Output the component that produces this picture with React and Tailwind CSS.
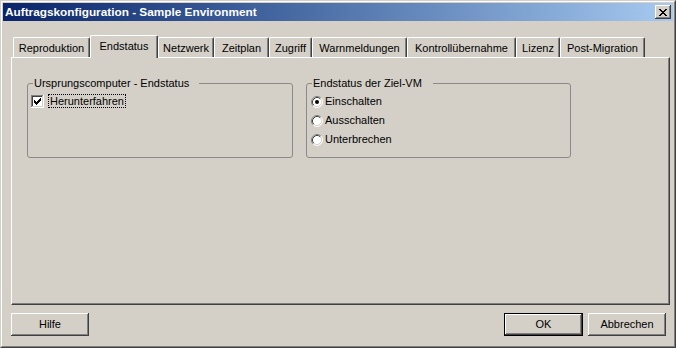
import React from "react";

const raised =
  "shadow-[inset_-1px_-1px_#404040,inset_1px_1px_#ffffff,inset_-2px_-2px_#808080,inset_2px_2px_#d4d0c8]";

function CheckBox() {
  const cols = [
    [3, 5], [4, 6], [5, 7], [6, 6], [7, 5], [8, 4], [9, 3],
  ];
  return (
    <svg width="13" height="13" viewBox="0 0 13 13" shapeRendering="crispEdges">
      <rect x="0" y="0" width="13" height="13" fill="#ffffff" />
      <rect x="0" y="0" width="12" height="1" fill="#808080" />
      <rect x="0" y="0" width="1" height="12" fill="#808080" />
      <rect x="1" y="1" width="10" height="1" fill="#404040" />
      <rect x="1" y="1" width="1" height="10" fill="#404040" />
      <rect x="1" y="11" width="11" height="1" fill="#d4d0c8" />
      <rect x="11" y="1" width="1" height="11" fill="#d4d0c8" />
      {cols.map(([x, y]) => (
        <rect key={x} x={x} y={y} width="1" height="3" fill="#000" />
      ))}
    </svg>
  );
}

function Radio({ checked }) {
  return (
    <svg width="12" height="12" viewBox="0 0 12 12">
      <circle cx="6" cy="6" r="5" fill="#ffffff" />
      <path d="M9.89 2.11 A5.5 5.5 0 0 0 2.11 9.89" fill="none" stroke="#808080" strokeWidth="1" />
      <path d="M2.11 9.89 A5.5 5.5 0 0 0 9.89 2.11" fill="none" stroke="#ffffff" strokeWidth="1" />
      <path d="M9.18 2.82 A4.5 4.5 0 0 0 2.82 9.18" fill="none" stroke="#404040" strokeWidth="1" />
      <path d="M2.82 9.18 A4.5 4.5 0 0 0 9.18 2.82" fill="none" stroke="#d4d0c8" strokeWidth="1" />
      {checked && <circle cx="6" cy="6" r="2" fill="#000" />}
    </svg>
  );
}

function Tab({ label, w, selected }) {
  if (selected) {
    return (
      <div
        className={`relative z-10 h-[23px] -mb-px flex items-start justify-center pt-[4px] bg-[#d4d0c8] border-l border-t border-white rounded-tl-[2px] rounded-tr-[2px] border-r border-r-[#404040] shadow-[inset_-1px_0_#808080] ${w}`}
      >
        {label}
      </div>
    );
  }
  return (
    <div
      className={`h-[20px] flex items-center justify-center pt-[1px] bg-[#d4d0c8] border-l border-t border-white rounded-tl-[2px] rounded-tr-[2px] border-r border-r-[#404040] shadow-[inset_-1px_0_#808080] ${w}`}
    >
      {label}
    </div>
  );
}

function Button({ children, def }) {
  if (def) {
    return (
      <div className="w-[79px] h-[23px] border border-black">
        <div className={`w-full h-full flex items-center justify-center ${raised}`}>{children}</div>
      </div>
    );
  }
  return (
    <div className={`w-[78px] h-[23px] flex items-center justify-center ${raised}`}>{children}</div>
  );
}

export default function App() {
  return (
    <div className="w-[676px] h-[348px] border border-t-[#d4d0c8] border-l-[#d4d0c8] border-r-[#404040] border-b-[#404040] bg-[#d4d0c8] font-['Liberation_Sans',Arial,sans-serif] text-[11px] leading-[13px] text-black">
      <div className="w-full h-full border border-t-white border-l-white border-r-[#808080] border-b-[#808080] p-px flex flex-col">
        {/* Title bar */}
        <div className="h-[18px] shrink-0 flex items-center justify-between bg-gradient-to-r from-[#0a246a] to-[#a6caf0] pl-[2px] pr-[2px]">
          <span className="font-bold text-white text-[11.8px] leading-[13px] font-['Liberation_Sans',Arial,sans-serif]">
            Auftragskonfiguration - Sample Environment
          </span>
          <div className={`w-[16px] h-[14px] flex items-center justify-center bg-[#d4d0c8] ${raised}`}>
            <svg width="8" height="7" viewBox="0 0 8 7" shapeRendering="crispEdges">
              <path d="M0 0h2v1H0zM6 0h2v1H6zM1 1h2v1H1zM5 1h2v1H5zM2 2h4v1H2zM3 3h2v1H3zM2 4h4v1H2zM1 5h2v1H1zM5 5h2v1H5zM0 6h2v1H0zM6 6h2v1H6z" fill="#000" />
            </svg>
          </div>
        </div>

        {/* Tabs + panel */}
        <div className="mt-[14px] ml-[8px] w-[659px] flex flex-col">
          <div className="h-[22px] flex items-end pl-[2px]">
            <Tab label="Reproduktion" w="w-[77px]" />
            <Tab label="Endstatus" w="w-[68px]" selected />
            <Tab label="Netzwerk" w="w-[56px]" />
            <Tab label="Zeitplan" w="w-[55px]" />
            <Tab label="Zugriff" w="w-[43px]" />
            <Tab label="Warnmeldungen" w="w-[95px]" />
            <Tab label="Kontrollübernahme" w="w-[109px]" />
            <Tab label="Lizenz" w="w-[44px]" />
            <Tab label="Post-Migration" w="w-[85px]" />
          </div>
          <div className="h-[248px] border-t border-l border-white border-r border-b border-r-[#404040] border-b-[#404040] shadow-[inset_-1px_-1px_#808080] flex gap-[13px] pl-[15px] pt-[25px]">
            {/* Left group */}
            <div className="relative w-[266px] h-[75px] border border-[#8a8a8a] rounded-[3px] pl-[3px] pt-[10px]">
              <div className="absolute -top-[7px] left-[5px] pl-[1px] pr-[10px] bg-[#d4d0c8]">
                Ursprungscomputer - Endstatus
              </div>
              <div className="flex items-center gap-[4px]">
                <CheckBox />
                <span className="border border-dotted border-black px-[1px] leading-[12px]">Herunterfahren</span>
              </div>
            </div>
            {/* Right group */}
            <div className="relative w-[265px] h-[75px] border border-[#8a8a8a] rounded-[3px] pl-[4px] pt-[11px] flex flex-col gap-[6px]">
              <div className="absolute -top-[7px] left-[5px] pl-[1px] pr-[11px] bg-[#d4d0c8]">
                Endstatus der Ziel-VM
              </div>
              <div className="flex items-center gap-[2px] h-[13px]">
                <Radio checked />
                <span>Einschalten</span>
              </div>
              <div className="flex items-center gap-[2px] h-[13px]">
                <Radio />
                <span>Ausschalten</span>
              </div>
              <div className="flex items-center gap-[2px] h-[13px]">
                <Radio />
                <span>Unterbrechen</span>
              </div>
            </div>
          </div>
        </div>

        {/* Buttons */}
        <div className="mt-[8px] ml-[8px] mr-[7px] flex justify-between">
          <Button>Hilfe</Button>
          <div className="flex gap-[5px]">
            <Button def>OK</Button>
            <Button>Abbrechen</Button>
          </div>
        </div>
      </div>
    </div>
  );
}
